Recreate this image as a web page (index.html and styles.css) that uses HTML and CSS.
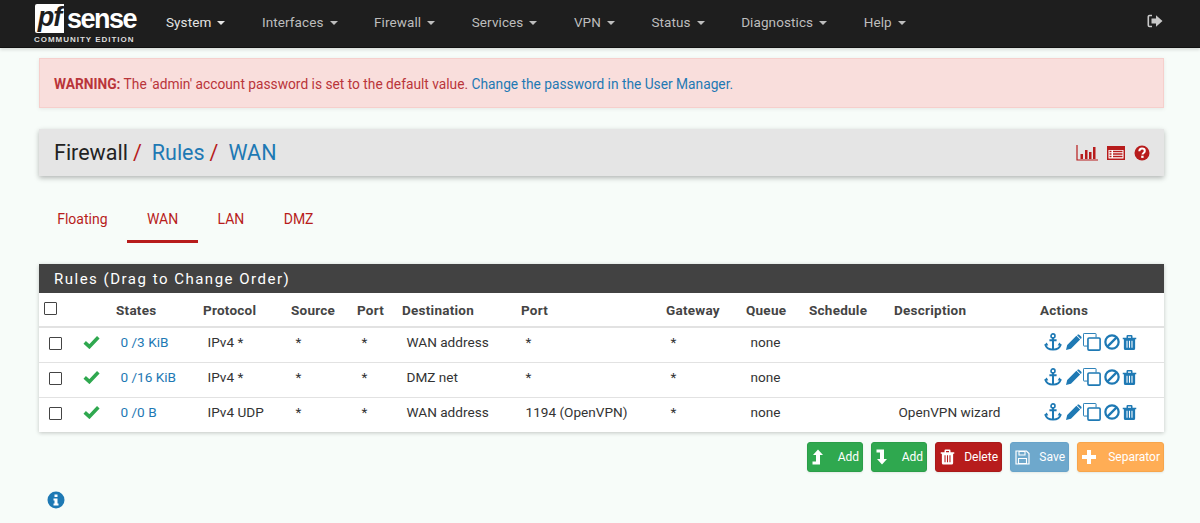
FILE: index.html
```html
<!DOCTYPE html>
<html lang="en">
<head>
<meta charset="utf-8">
<title>pfSense - Firewall: Rules: WAN</title>
<link rel="stylesheet" href="styles.css">
</head>
<body>
<svg class="sprite" width="0" height="0">
  <symbol id="i-anchor" viewBox="0 0 20 20"><circle cx="10" cy="3.200" r="2.200" fill="none" stroke="currentColor" stroke-width="1.800"/><path d="M10 5.200V18.500M6 8h8" stroke="currentColor" stroke-width="2.200" fill="none"/><path d="M1.500 12.500c.6 3.600 4 6 8.500 6s7.900-2.400 8.500-6" stroke="currentColor" stroke-width="2" fill="none"/><path d="M0 13.500l3-3 1.800 3.500zM20 13.500l-3-3-1.800 3.500z" fill="currentColor"/></symbol>
  <symbol id="i-pencil" viewBox="0 0 20 20"><path d="M0 20l1.500-6.200L13 2.300l4.700 4.700L6.200 18.500zM14.200 1.100c.8-.8 1.800-.8 2.600 0l2.100 2.100c.8.800.8 1.800 0 2.600l-.4.400-4.700-4.700z" fill="currentColor"/></symbol>
  <symbol id="i-copy" viewBox="0 0 20 20"><path d="M5 14.500H1.300A.8.800 0 0 1 .5 13.700V1.300A.8.800 0 0 1 1.300.5h12.400a.8.800 0 0 1 .8.800V5" fill="none" stroke="currentColor" stroke-width="1.100"/><rect x="5.500" y="5.500" width="13.500" height="13.500" rx="1.200" fill="none" stroke="currentColor" stroke-width="1.800"/></symbol>
  <symbol id="i-ban" viewBox="0 0 20 20"><circle cx="10" cy="10" r="8.300" fill="none" stroke="currentColor" stroke-width="2.800"/><path d="M4.200 15.800L15.800 4.200" stroke="currentColor" stroke-width="2.800"/></symbol>
  <symbol id="i-trash" viewBox="0 0 20 20"><path d="M1 3.500h18v2h-1.500V18a2 2 0 0 1-2 2h-11a2 2 0 0 1-2-2V5.500H1zM6 3.500V1.500a1.500 1.500 0 0 1 1.500-1.500h5A1.500 1.500 0 0 1 14 1.500v2h-2V2H8v1.500z" fill="currentColor"/><path d="M6.700 7.500v9.500M10 7.500v9.500M13.300 7.500v9.500" stroke="var(--gap, #fff)" stroke-width="1.400"/></symbol>
  <symbol id="i-check" viewBox="0 0 20 16"><path d="M2 8.500l5.500 5L18 2.500" fill="none" stroke="currentColor" stroke-width="4.200"/></symbol>
</svg>

<nav class="navbar">
  <a class="logo" href="#">
    <span class="logo-top"><span class="logo-pf">pf</span><span class="logo-sense">sense</span></span>
    <span class="logo-sub">COMMUNITY EDITION</span>
  </a>
  <ul class="menu">
    <li class="menu-item menu-active">System<i class="caret"></i></li>
    <li class="menu-item">Interfaces<i class="caret"></i></li>
    <li class="menu-item">Firewall<i class="caret"></i></li>
    <li class="menu-item">Services<i class="caret"></i></li>
    <li class="menu-item">VPN<i class="caret"></i></li>
    <li class="menu-item">Status<i class="caret"></i></li>
    <li class="menu-item">Diagnostics<i class="caret"></i></li>
    <li class="menu-item">Help<i class="caret"></i></li>
  </ul>
  <a class="logout" href="#" aria-label="Logout">
    <svg width="16" height="14" viewBox="0 0 16 14"><path d="M5 1.500H2.500A1.200 1.200 0 0 0 1.300 2.700v8.600a1.200 1.200 0 0 0 1.200 1.200H5" fill="none" stroke="#c8c8c8" stroke-width="1.600"/><path d="M4.500 4.500h4.500V1.200L15.500 7 9 12.800V9.500H4.500z" fill="#c8c8c8"/></svg>
  </a>
</nav>

<main class="page">
  <div class="alert"><b>WARNING:</b> The 'admin' account password is set to the default value. <a href="#">Change the password in the User Manager.</a></div>

  <header class="page-header">
    <h1 class="crumbs"><span>Firewall</span><i class="sep">/</i><a href="#">Rules</a><i class="sep">/</i><a href="#">WAN</a></h1>
    <div class="header-icons">
      <svg width="22" height="16" viewBox="0 0 22 16"><path d="M1 0v15h21" fill="none" stroke="#b71c1c" stroke-width="1.200"/><path d="M4.500 9h2.500v5H4.500zM9 5h2.500v9H9zM13 7h2.500v7H13zM17 2h2.500v12H17z" fill="#b71c1c"/></svg>
      <svg width="18" height="14" viewBox="0 0 18 14"><path d="M0 0h18v14H0z" fill="#b71c1c"/><path d="M1.500 4h15v8.500h-15z" fill="#fff"/><path d="M2.500 5.500h2M2.500 8h2M2.500 10.500h2M6 5.500h9.500M6 8h9.500M6 10.500h9.500" stroke="#b71c1c" stroke-width="1.300"/></svg>
      <svg width="16" height="16" viewBox="0 0 16 16"><circle cx="8" cy="8" r="7.500" fill="#b71c1c"/><path d="M5.300 6.200C5.400 4.500 6.500 3.600 8 3.600c1.600 0 2.800 1 2.800 2.300 0 2-2.300 2-2.300 3.600" fill="none" stroke="#fff" stroke-width="2"/><path d="M7.200 10.700h2.400v2.200H7.200z" fill="#fff"/></svg>
    </div>
  </header>

  <ul class="tabs">
    <li class="tab">Floating</li>
    <li class="tab tab-active">WAN</li>
    <li class="tab">LAN</li>
    <li class="tab">DMZ</li>
  </ul>

  <section class="panel">
    <h2 class="panel-title">Rules (Drag to Change Order)</h2>
    <table class="rules">
      <colgroup>
        <col class="c1"><col class="c2"><col class="c3"><col class="c4"><col class="c5"><col class="c6"><col class="c7"><col class="c8"><col class="c9"><col class="c10"><col class="c11"><col class="c12"><col class="c13">
      </colgroup>
      <thead>
        <tr><th><span class="box box-head"></span></th><th></th><th>States</th><th>Protocol</th><th>Source</th><th>Port</th><th>Destination</th><th>Port</th><th>Gateway</th><th>Queue</th><th>Schedule</th><th>Description</th><th>Actions</th></tr>
      </thead>
      <tbody>
        <tr>
          <td><span class="box"></span></td><td><svg class="check"><use href="#i-check"/></svg></td><td><a href="#">0 /3 KiB</a></td><td>IPv4 *</td><td>*</td><td>*</td><td>WAN address</td><td>*</td><td>*</td><td>none</td><td></td><td></td>
          <td class="acts"><svg class="a-anchor"><use href="#i-anchor"/></svg><svg class="a-pencil"><use href="#i-pencil"/></svg><svg class="a-copy"><use href="#i-copy"/></svg><svg class="a-ban"><use href="#i-ban"/></svg><svg class="a-trash"><use href="#i-trash"/></svg></td>
        </tr>
        <tr>
          <td><span class="box"></span></td><td><svg class="check"><use href="#i-check"/></svg></td><td><a href="#">0 /16 KiB</a></td><td>IPv4 *</td><td>*</td><td>*</td><td>DMZ net</td><td>*</td><td>*</td><td>none</td><td></td><td></td>
          <td class="acts"><svg class="a-anchor"><use href="#i-anchor"/></svg><svg class="a-pencil"><use href="#i-pencil"/></svg><svg class="a-copy"><use href="#i-copy"/></svg><svg class="a-ban"><use href="#i-ban"/></svg><svg class="a-trash"><use href="#i-trash"/></svg></td>
        </tr>
        <tr>
          <td><span class="box"></span></td><td><svg class="check"><use href="#i-check"/></svg></td><td><a href="#">0 /0 B</a></td><td>IPv4 UDP</td><td>*</td><td>*</td><td>WAN address</td><td>1194 (OpenVPN)</td><td>*</td><td>none</td><td></td><td>OpenVPN wizard</td>
          <td class="acts"><svg class="a-anchor"><use href="#i-anchor"/></svg><svg class="a-pencil"><use href="#i-pencil"/></svg><svg class="a-copy"><use href="#i-copy"/></svg><svg class="a-ban"><use href="#i-ban"/></svg><svg class="a-trash"><use href="#i-trash"/></svg></td>
        </tr>
      </tbody>
    </table>
  </section>

  <div class="buttons">
    <button class="btn btn-green w-add"><svg width="12" height="16" viewBox="0 0 12 16"><path d="M6 .5L11 6H8V15.500H.5V12.500H4V6H1z" fill="#fff"/></svg><span>Add</span></button>
    <button class="btn btn-green w-add"><svg width="12" height="16" viewBox="0 0 12 16"><path d="M.5 .5H8V10h3l-5 5.500L1 10h3V3.500H.5z" fill="#fff"/></svg><span>Add</span></button>
    <button class="btn btn-red w-del"><svg width="15" height="16"><use href="#i-trash"/></svg><span>Delete</span></button>
    <button class="btn btn-blue w-save"><svg width="15" height="15" viewBox="0 0 15 15"><path d="M1 1h10.500L14 3.500V14H1z" fill="none" stroke="#fff" stroke-width="1.200"/><path d="M4 1.500h6V5H4zM3.500 8.500h8V13.500h-8z" fill="none" stroke="#fff" stroke-width="1.100"/></svg><span>Save</span></button>
    <button class="btn btn-orange w-sep"><svg width="14" height="14" viewBox="0 0 14 14"><path d="M5 0h4v5h5v4H9v5H5V9H0V5h5z" fill="#fff"/></svg><span>Separator</span></button>
  </div>

  <div class="info">
    <svg width="18" height="18" viewBox="0 0 18 18"><circle cx="9" cy="9" r="8.500" fill="#1e79b4"/><path d="M7.500 3.500h3v2.500h-3zM6.500 7.500h4v5h1v2h-5v-2h1v-3h-1z" fill="#fff"/></svg>
  </div>
</main>
</body>
</html>
```
FILE: styles.css
```css
* { box-sizing: border-box; }
html, body { margin: 0; height: 523px; overflow: hidden; }
body { background: #f7fcf9; font-family: Roboto, "Liberation Sans", sans-serif; font-size: 14px; color: #333; }
a { color: #1e79b4; text-decoration: none; }
ul { list-style: none; margin: 0; padding: 0; }
.sprite { position: absolute; }

.navbar { height: 48px; background: #1e1e1e; border-bottom: 1px solid #111; box-shadow: 0 2px 3px rgba(0,0,0,.12); display: flex; align-items: center; padding-left: 34px; }
.logo { width: 113px; display: flex; flex-direction: column; height: 47px; padding-top: 4px; flex: none; }
.logo-top { display: flex; align-items: flex-end; height: 29px; }
.logo-pf { background: #fff; color: #1e1e1e; width: 29px; height: 29px; margin-left: 1px; border-radius: 2px 0 0 2px; font: italic 700 27px/27px "Liberation Sans", sans-serif; letter-spacing: -1px; text-align: center; flex: none; }
.logo-sense { color: #fff; font: 700 27px/27px "Liberation Sans", sans-serif; margin-left: 3px; letter-spacing: -1.500px; }
.logo-sub { color: #ddd; font: 700 8px/10px "Liberation Sans", sans-serif; letter-spacing: .98px; margin-top: 2px; white-space: nowrap; }
.menu { display: flex; margin: 0 0 4px 19px; flex: 1; }
.menu-item { color: #bdbdbd; font-size: 13.500px; letter-spacing: .1px; padding-right: 36.500px; white-space: nowrap; }
.menu-active { color: #e4e4e4; }
.caret { display: inline-block; border-top: 4px solid currentColor; border-left: 4px solid transparent; border-right: 4px solid transparent; margin-left: 6px; vertical-align: 2px; }
.logout { margin: 0 37px 6px 0; display: flex; }

.page { padding: 10px 36px 0 39px; }
.alert { height: 50px; background: #f9dedc; border: 1px solid #f6cfcc; color: #b9353a; padding-left: 14px; line-height: 50px; font-size: 13.750px; box-shadow: 0 1px 4px rgba(0,0,0,.08); }
.alert b { font-weight: 700; }

.page-header { margin-top: 21px; height: 47px; background: #e5e5e5; box-shadow: 0 2px 5px rgba(0,0,0,.28); display: flex; align-items: center; justify-content: space-between; padding: 0 14px 0 15px; }
.crumbs { margin: 0; font-size: 21.500px; font-weight: 400; color: #222; display: flex; align-items: baseline; }
.sep { font-style: normal; color: #b71c1c; margin: 0 10px 0 5px; }
.header-icons { display: flex; align-items: center; gap: 9px; }

.tabs { display: flex; margin: 27px 0 0 -1.500px; height: 40px; }
.tab { color: #b71c1c; font-size: 14px; padding: 8px 19.700px 0; height: 29px; box-sizing: content-box; }
.tab-active { border-bottom: 3px solid #b71c1c; }

.panel { margin-top: 21px; background: #fff; box-shadow: 0 1px 4px rgba(0,0,0,.22); }
.panel-title { margin: 0; height: 29px; background: #424242; color: #fff; font-size: 15px; font-weight: 400; letter-spacing: 1.500px; line-height: 31px; padding-left: 15px; }

.rules { width: 100%; table-layout: fixed; border-collapse: collapse; font-size: 13.600px; }
.c1 { width: 37px; } .c2 { width: 35px; } .c3 { width: 87px; } .c4 { width: 88px; } .c5 { width: 66px; } .c6 { width: 45px; } .c7 { width: 119px; } .c8 { width: 145px; } .c9 { width: 80px; } .c10 { width: 63px; } .c11 { width: 85px; } .c12 { width: 146px; } .c13 { width: auto; }
.rules th { height: 34px; text-align: left; font-weight: 700; font-size: 13.500px; letter-spacing: .25px; color: #444; padding: 0 5px; border-bottom: 2px solid #e2e2e2; }
.rules td { height: 35px; padding: 0 5px 5px 9.500px; color: #333; border-bottom: 1px solid #e2e2e2; white-space: nowrap; }
.rules tr:last-child td { border-bottom: 0; }
.box { display: block; width: 13px; height: 13px; background: #fff; border: 1px solid #444; border-radius: 1px; margin: 3px 0 0 0; }
.box-head { margin: -2px 0 0 0; }
.check { width: 17px; height: 14px; color: #2fa84f; display: block; margin-left: -3px; }
.acts { color: #1e79b4; padding-left: 9px !important; }
.acts svg { display: inline-block; vertical-align: middle; color: #1e79b4; }
.a-anchor { width: 18px; height: 18px; }
.a-pencil { width: 16px; height: 16px; margin-left: 4px; }
.a-copy { width: 18px; height: 18px; margin-left: 1px; }
.a-ban { width: 16px; height: 16px; margin-left: 3px; }
.a-trash { width: 15px; height: 15px; margin-left: 2px; }

.buttons { display: flex; justify-content: flex-end; gap: 8px; margin-top: 10px; }
.btn { height: 30px; border: 1px solid; border-radius: 3px; color: #fff; font: 400 12px Roboto, sans-serif; display: flex; align-items: center; justify-content: space-between; padding: 0 3px 0 4px; box-shadow: 0 1px 2px rgba(0,0,0,.08); }
.btn-green { background: #2fa84f; border-color: #2b9e49; }
.btn-red { background: #b71c1c; border-color: #a81a1a; --gap: #b71c1c; }
.btn-blue { background: #6ea8cc; border-color: #67a3c9; }
.btn-orange { background: #ffad55; border-color: #f7a54b; }
.w-add { width: 56px; } .w-del { width: 67px; } .w-save { width: 59px; } .w-sep { width: 87px; }

.info { margin: 19px 0 0 8px; }
```
